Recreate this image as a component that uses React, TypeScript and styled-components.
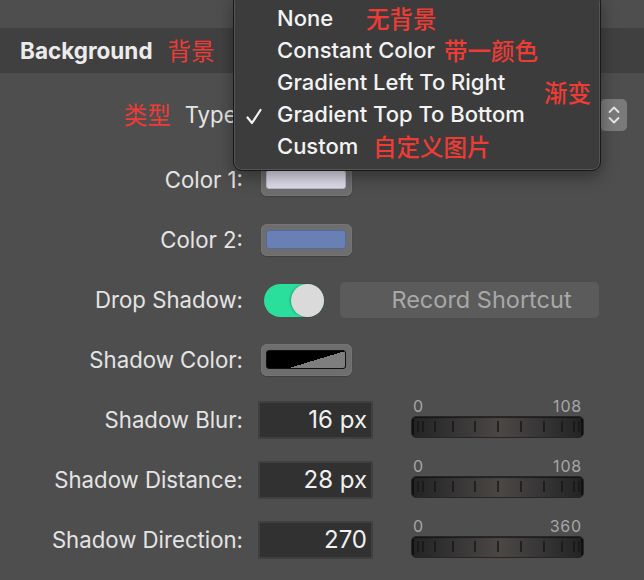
import React from "react";
import styled, { createGlobalStyle } from "styled-components";

const Global = createGlobalStyle`
  html, body { margin: 0; padding: 0; background: #4d4d4d; }
  body { font-family: Inter, "Noto Sans", "Noto Sans CJK SC", sans-serif; -webkit-font-smoothing: antialiased; }
  * { box-sizing: border-box; }
`;

const Page = styled.div`
  position: relative;
  width: 644px;
  height: 580px;
  overflow: hidden;
  background: #4e4e4e;
  padding-top: 28px;
`;

const HeaderBar = styled.div`
  height: 45px;
  background: #404040;
  display: flex;
  align-items: center;
  padding-left: 20px;
  padding-bottom: 1px;
  gap: 15px;
`;

const HeaderTitle = styled.span`
  font-size: 22.5px;
  font-weight: 700;
  color: #ececec;
`;

const Note = styled.span`
  font-family: "Noto Sans CJK SC", sans-serif;
  font-size: 23.5px;
  color: #ee3b35;
  white-space: nowrap;
`;

const Form = styled.div`
  display: grid;
  grid-template-columns: 243px 1fr;
  column-gap: 18px;
  padding-top: 7px;
`;

const Label = styled.div<{ $tall?: boolean }>`
  height: ${(p) => (p.$tall ? 70 : 60)}px;
  display: flex;
  align-items: center;
  justify-content: flex-end;
  gap: 14px;
  padding-bottom: 2px;
  font-size: 22.2px;
  color: #e4e4e4;
  white-space: nowrap;
`;

const Control = styled.div<{ $tall?: boolean }>`
  height: ${(p) => (p.$tall ? 70 : 60)}px;
  display: flex;
  align-items: center;
`;

const PopupButton = styled.div`
  width: 366px;
  height: 32px;
  border-radius: 6px;
  background: #5e5e5e;
  display: flex;
  justify-content: flex-end;
`;

const Stepper = styled.div`
  width: 26px;
  height: 32px;
  border-radius: 5px;
  background: #7a7a7a;
  display: flex;
  align-items: center;
  justify-content: center;
`;

const Well = styled.div`
  width: 91px;
  height: 32px;
  border-radius: 6px;
  background: #6e6e6e;
  padding: 6px 6px 7px 5px;
  box-shadow: inset 0 0 0 1px #747474, 0 1px 1px rgba(0, 0, 0, 0.2);
`;

const Swatch = styled.div<{ $color: string; $edge: string }>`
  width: 100%;
  height: 100%;
  border-radius: 3px;
  background: ${(p) => p.$color};
  border: 1.5px solid ${(p) => p.$edge};
`;

const ShadowSwatch = styled.div`
  width: 100%;
  height: 100%;
  border-radius: 3px;
  border: 1.5px solid #111;
  background: linear-gradient(to top left, #7e7e7e 0, #7e7e7e 50%, #000 50%, #000 100%);
  background-size: 72% 100%;
  background-position: right;
  background-repeat: no-repeat;
  background-color: #000;
`;

const Toggle = styled.div`
  width: 60px;
  height: 33px;
  margin-left: 3px;
  border-radius: 17px;
  background: #2ade9b;
  display: flex;
  justify-content: flex-end;
`;

const Knob = styled.div`
  width: 33px;
  height: 33px;
  border-radius: 50%;
  background: #dadada;
  box-shadow: -1px 0 2px rgba(0, 0, 0, 0.25);
`;

const ShortcutButton = styled.div`
  margin-left: 16px;
  width: 259px;
  height: 36px;
  border-radius: 5px;
  background: #5b5b5b;
  color: #a8a8a8;
  font-size: 23.5px;
  display: flex;
  align-items: center;
  justify-content: center;
  padding-left: 24px;
  padding-bottom: 1px;
`;

const Field = styled.div`
  margin-left: -3px;
  width: 115px;
  height: 38px;
  background: #313131;
  border: 2px solid #404040;
  display: flex;
  align-items: center;
  justify-content: flex-end;
  padding-right: 4px;
  padding-bottom: 2px;
  font-size: 24px;
  color: #f0f0f0;
`;

const SliderBox = styled.div`
  margin-left: 38px;
  width: 173px;
  display: flex;
  flex-direction: column;
  gap: 2px;
  margin-top: -4px;
`;

const SliderScale = styled.div`
  display: flex;
  justify-content: space-between;
  padding: 0 2px 0 2px;
  font-size: 16px;
  letter-spacing: 0.8px;
  color: #a6a6a6;
  line-height: 16px;
`;

const Track = styled.div`
  height: 22px;
  border-radius: 5px;
  border: 1px solid #262626;
  background: linear-gradient(to right, #232323 0%, #3a3838 30%, #4b4745 52%, #3a3838 72%, #232323 100%);
  box-shadow: inset 0 1px 1px rgba(0, 0, 0, 0.5);
  overflow: hidden;
`;

const Menu = styled.div`
  position: absolute;
  left: 233px;
  top: -7px;
  width: 368px;
  padding: 8px 0;
  background: #3c3c3c;
  border: 1px solid #191919;
  border-radius: 9px;
  box-shadow: inset 0 0 0 1px #555, 0 6px 16px rgba(0, 0, 0, 0.35);
  z-index: 5;
`;

const MenuItem = styled.div`
  position: relative;
  height: 32px;
  display: flex;
  align-items: center;
  padding-left: 43px;
  font-size: 22px;
  font-weight: 500;
  color: #f3f3f3;
`;

const Check = styled.span`
  position: absolute;
  left: 11px;
  top: 7px;
  width: 18px;
  height: 18px;
`;

const MenuNote = styled(Note)<{ $x: number; $y?: number }>`
  position: absolute;
  left: ${(p) => p.$x}px;
  top: ${(p) => p.$y ?? 0}px;
  line-height: 32px;
`;

const ticks = [6, 11, 23, 41, 63, 86, 109, 132, 150, 162, 167];

function Slider({ max }: { max: string }) {
  return (
    <SliderBox>
      <SliderScale>
        <span>0</span>
        <span>{max}</span>
      </SliderScale>
      <Track>
        <svg width="171" height="20" viewBox="0 0 171 20">
          {ticks.map((x) => (
            <line key={x} x1={x} x2={x} y1="4" y2="15" stroke="#161616" strokeWidth="1.4" />
          ))}
          <rect x="0" y="2" width="2" height="16" fill="#111" />
          <rect x="169" y="2" width="2" height="16" fill="#111" />
        </svg>
      </Track>
    </SliderBox>
  );
}

export default function App() {
  return (
    <>
      <Global />
      <Page>
        <HeaderBar>
          <HeaderTitle>Background</HeaderTitle>
          <Note>背景</Note>
        </HeaderBar>
        <Form>
          <Label $tall>
            <Note>类型</Note>
            <span>Type:</span>
          </Label>
          <Control $tall>
            <PopupButton>
              <Stepper>
                <svg width="14" height="22" viewBox="0 0 14 22">
                  <path d="M2.5 8 L7 3.5 L11.5 8" fill="none" stroke="#e8e8e8" strokeWidth="1.8" strokeLinecap="round" strokeLinejoin="round" />
                  <path d="M2.5 14 L7 18.5 L11.5 14" fill="none" stroke="#e8e8e8" strokeWidth="1.8" strokeLinecap="round" strokeLinejoin="round" />
                </svg>
              </Stepper>
            </PopupButton>
          </Control>

          <Label>Color 1:</Label>
          <Control>
            <Well>
              <Swatch $color="#dddbe9" $edge="#b9b7cb" />
            </Well>
          </Control>

          <Label>Color 2:</Label>
          <Control>
            <Well>
              <Swatch $color="#6a80b5" $edge="#5668a0" />
            </Well>
          </Control>

          <Label>Drop Shadow:</Label>
          <Control>
            <Toggle>
              <Knob />
            </Toggle>
            <ShortcutButton>Record Shortcut</ShortcutButton>
          </Control>

          <Label>Shadow Color:</Label>
          <Control>
            <Well>
              <ShadowSwatch />
            </Well>
          </Control>

          <Label>Shadow Blur:</Label>
          <Control>
            <Field>16 px</Field>
            <Slider max="108" />
          </Control>

          <Label>Shadow Distance:</Label>
          <Control>
            <Field>28 px</Field>
            <Slider max="108" />
          </Control>

          <Label>Shadow Direction:</Label>
          <Control>
            <Field>270</Field>
            <Slider max="360" />
          </Control>
        </Form>

        <Menu>
          <MenuItem>
            None
            <MenuNote $x={132}>无背景</MenuNote>
          </MenuItem>
          <MenuItem>
            Constant Color
            <MenuNote $x={210}>带一颜色</MenuNote>
          </MenuItem>
          <MenuItem>
            Gradient Left To Right
            <MenuNote $x={310} $y={10}>渐变</MenuNote>
          </MenuItem>
          <MenuItem>
            <Check>
              <svg width="18" height="18" viewBox="0 0 18 18">
                <path d="M2.5 9.5 L7 15 L15.5 2" fill="none" stroke="#f3f3f3" strokeWidth="2.2" strokeLinecap="round" strokeLinejoin="round" />
              </svg>
            </Check>
            Gradient Top To Bottom
          </MenuItem>
          <MenuItem>
            Custom
            <MenuNote $x={139}>自定义图片</MenuNote>
          </MenuItem>
        </Menu>
      </Page>
    </>
  );
}
